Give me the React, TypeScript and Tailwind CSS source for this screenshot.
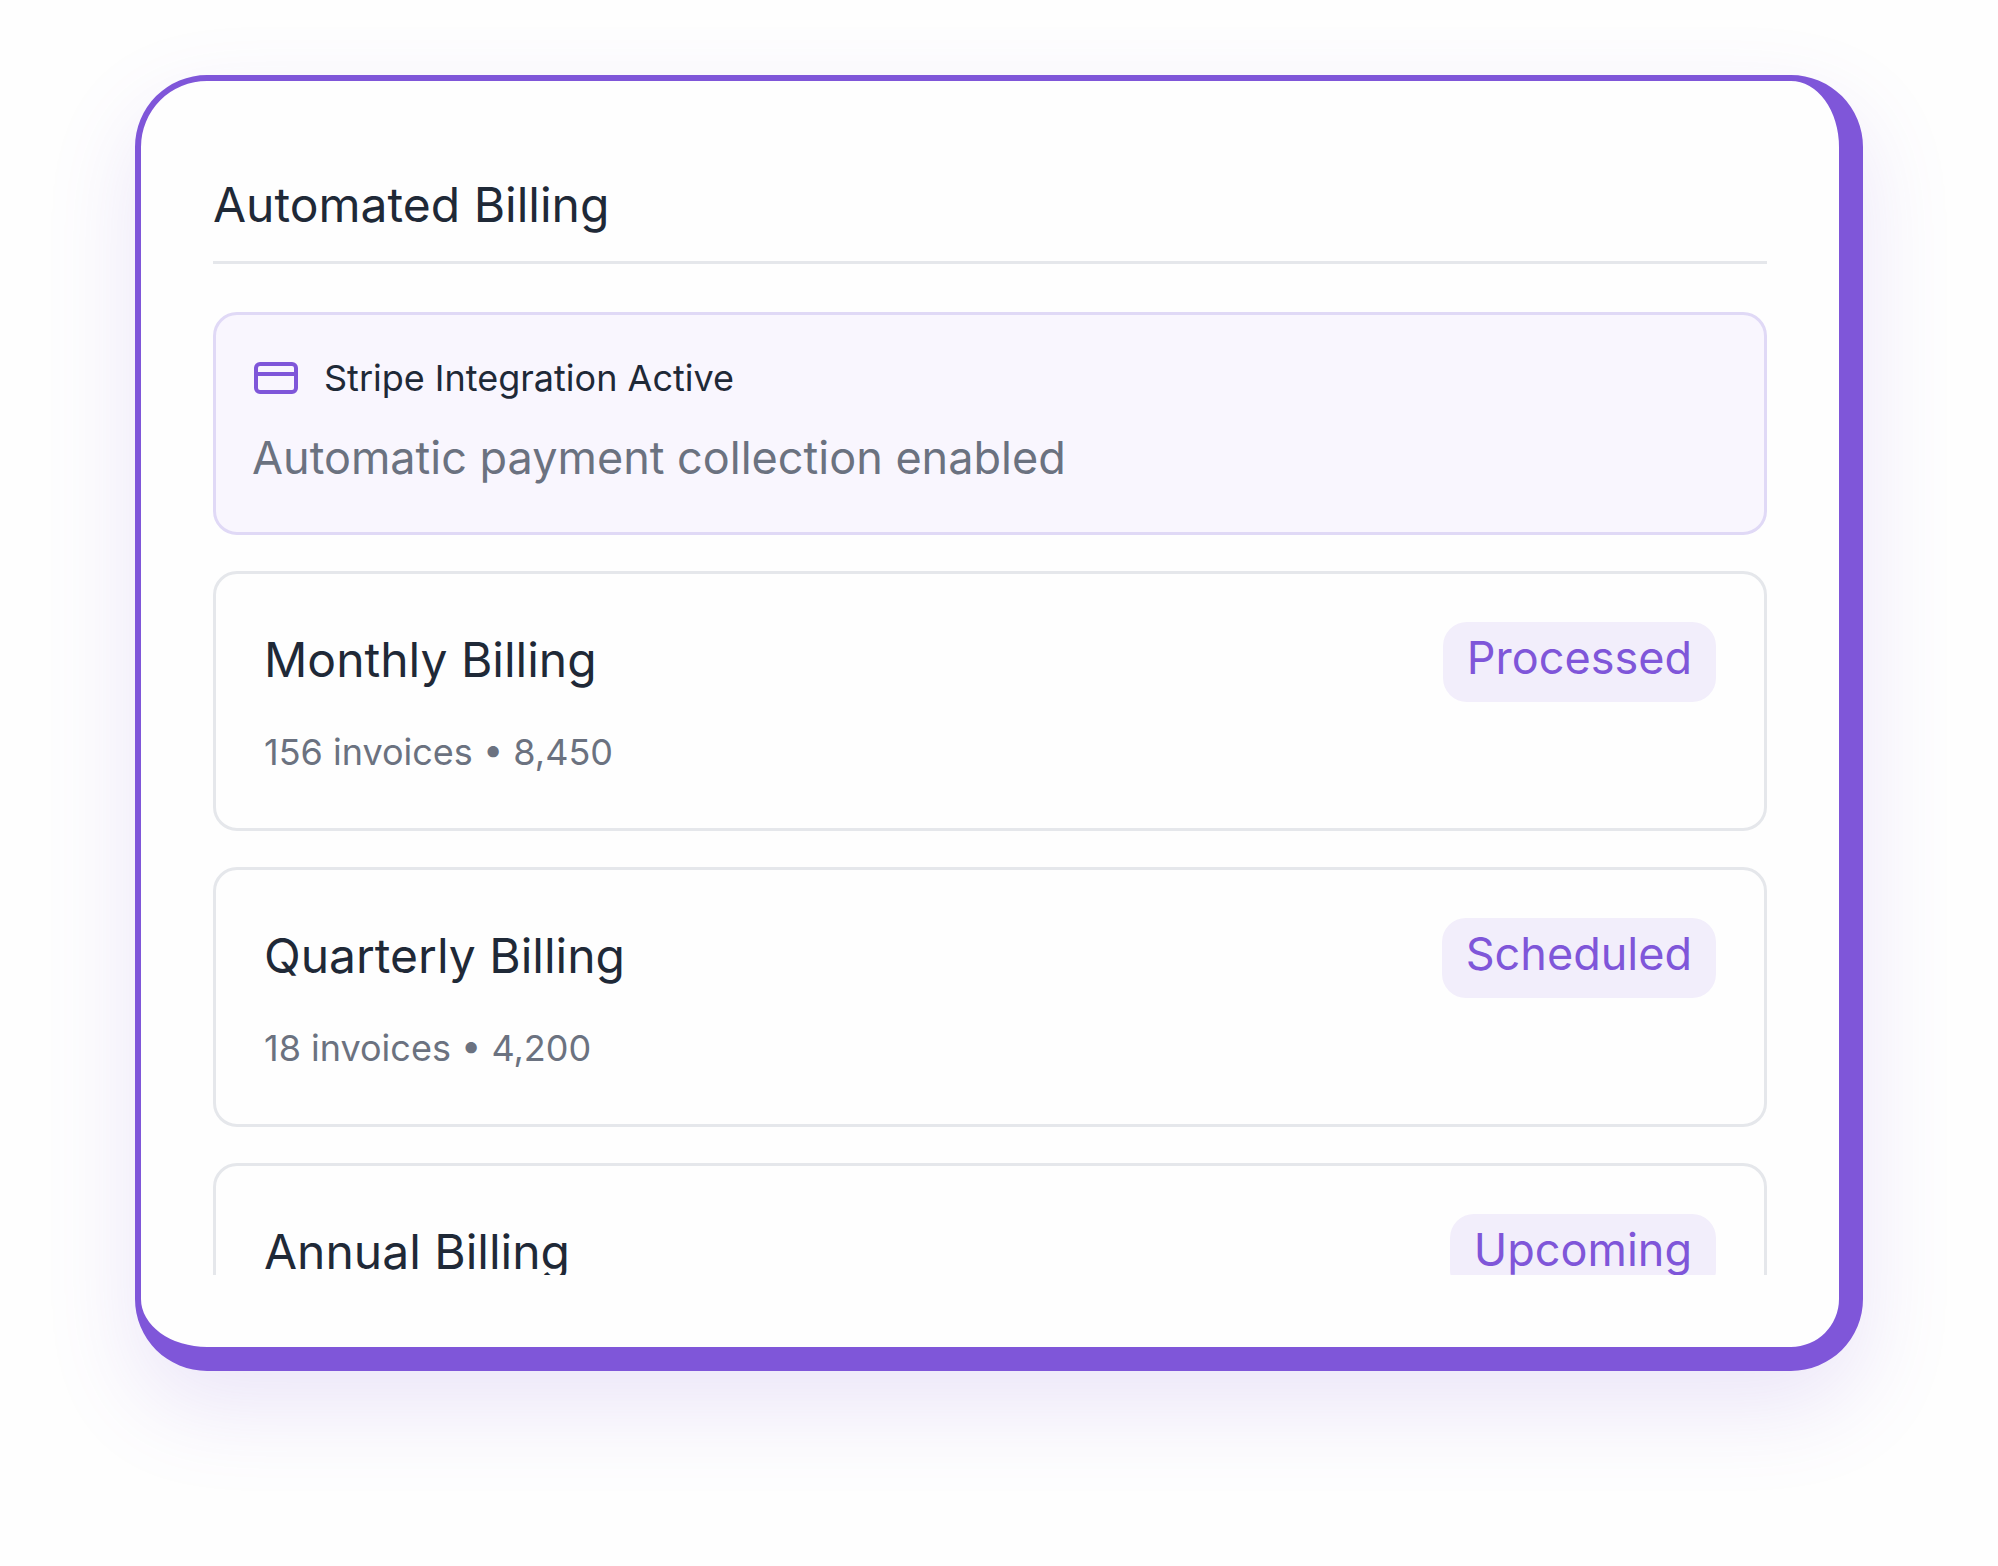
import { CreditCard } from 'lucide-react';

type Plan = { name: string; detail?: string; status: string };

const plans: Plan[] = [
  { name: 'Monthly Billing', detail: '156 invoices • 8,450', status: 'Processed' },
  { name: 'Quarterly Billing', detail: '18 invoices • 4,200', status: 'Scheduled' },
  { name: 'Annual Billing', status: 'Upcoming' },
];

function PlanCard({ name, detail, status }: Plan) {
  return (
    <li className="flex h-[260px] shrink-0 items-start justify-between rounded-3xl border-3 border-[#e5e7eb] p-12">
      <div>
        <h3 className="pt-2 text-5xl leading-[60px] text-[#1f2937]">{name}</h3>
        {detail && <p className="mt-9 text-4xl leading-[52px] text-[#6b7280]">{detail}</p>}
      </div>
      <span className="h-20 rounded-3xl bg-[#f2eefb] px-6 text-[45px] leading-[72px] text-[#7f56d9]">{status}</span>
    </li>
  );
}

export default function App() {
  return (
    <div className="min-h-screen bg-[#fefefe] px-[135px] pt-[75px] pb-[195px] font-['Inter',sans-serif]">
      <main className="rounded-[72px] border-6 border-r-24 border-b-24 border-[#7f56d9] bg-[#fefefe] p-18 shadow-[0_36px_90px_rgba(127,86,217,0.15)]">
        <div className="h-[1122px] overflow-hidden">
          <h2 className="border-b-3 border-[#e5e7eb] pt-5 pb-6 text-5xl leading-[64px] text-[#1f2937]">
            Automated Billing
          </h2>

          <section className="mt-12 h-[223px] rounded-3xl border-3 border-[#e0d9f6] bg-[#f9f6fe] p-9">
            <div className="flex items-center gap-6">
              <CreditCard className="text-[#7f56d9]" size={48} />
              <h3 className="text-4xl leading-[54px] text-[#1f2937]">Stripe Integration Active</h3>
            </div>
            <p className="mt-5 text-[45px] leading-[66px] text-[#6b7280]">Automatic payment collection enabled</p>
          </section>

          <ul className="mt-9 flex flex-col gap-9">
            {plans.map((plan) => (
              <PlanCard key={plan.name} {...plan} />
            ))}
          </ul>
        </div>
      </main>
    </div>
  );
}
